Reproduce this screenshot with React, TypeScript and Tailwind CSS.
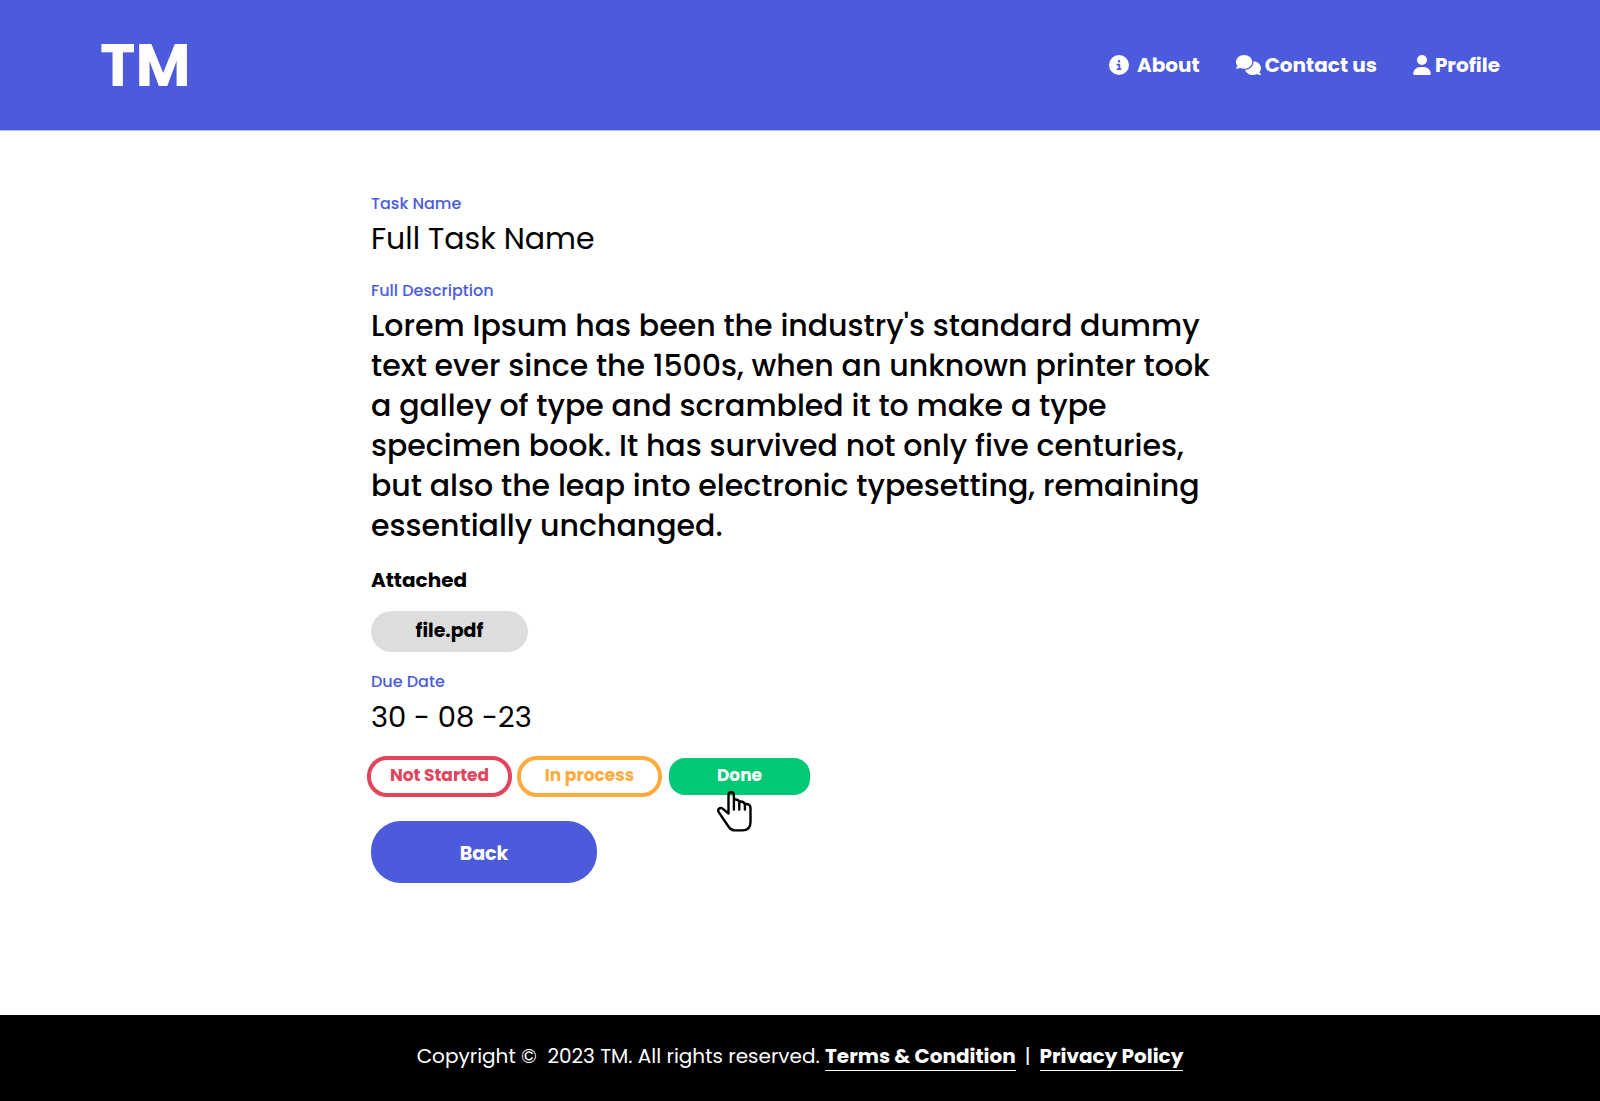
import type { ReactNode } from "react";
import { FaCircleInfo, FaComments, FaUser } from "react-icons/fa6";

function HandCursor() {
  return (
    <svg
      aria-hidden="true"
      viewBox="0 0 35 41"
      className="pointer-events-none absolute top-[33px] left-12 h-[41px] w-[35px]"
      fill="none"
      stroke="#000"
      strokeWidth="2.4"
      strokeLinecap="round"
      strokeLinejoin="round"
    >
      <path
        d="M11.5 21.5V4a2.7 2.7 0 0 1 5.4 0v4.6q4.8-1.2 5.4 2.6q4.6-1.2 5.6 2.4q5.6-1 5.6 3.4V31q0 8.4-8 8.4h-7.5q-4 0-6.200-3.400L1.600 20.800C.2 18.200 3.200 15.800 5.600 17.600Z"
        fill="#fff"
        stroke="none"
      />
      <path d="M11.500 4a2.700 2.700 0 0 1 5.400 0V4.500H11.500Z" fill="#00c875" stroke="none" />
      <path d="M11.500 22V4a2.700 2.700 0 0 1 5.400 0v14.500M16.900 8.600q4.800-.8 5.400 2.900v7M22.300 10.600q4.800-.6 5.600 3v5M27.900 13q5.600-.6 5.600 4V31q0 8.400-8 8.400h-7.500q-4 0-6.200-3.400L1.600 20.800C.2 18.200 3.200 15.800 5.600 17.600L11.500 22.500" />
    </svg>
  );
}

function Label({ children }: { children: ReactNode }) {
  return <h2 className="text-base leading-6 font-medium text-[#4c5bdc]">{children}</h2>;
}

export default function App() {
  return (
    <div className="flex min-h-screen flex-col bg-white font-['Poppins','Inter',sans-serif] text-black">
      <header className="flex h-[131px] items-center justify-between border-b border-[#b5bbf0] bg-[#4c5bdc] px-[100px] text-white">
        <a href="#" className="text-[60px] leading-none font-bold">
          TM
        </a>
        <nav className="flex items-center gap-9 text-xl font-bold">
          <a href="#about" className="flex items-center gap-2">
            <FaCircleInfo className="size-5" />
            About
          </a>
          <a href="#contact" className="flex items-center gap-1">
            <FaComments className="h-5 w-[25px]" />
            Contact us
          </a>
          <a href="#profile" className="flex items-center gap-1">
            <FaUser className="h-5 w-[18px]" />
            Profile
          </a>
        </nav>
      </header>

      <main className="mx-auto w-full max-w-[858px] flex-1 pt-[61px] pb-10">
        <Label>Task Name</Label>
        <p className="mt-[3px] text-[30px] leading-10">Full Task Name</p>

        <div className="mt-5">
          <Label>Full Description</Label>
        </div>
        <p className="mt-[3px] text-[30px] leading-10 font-medium">
          Lorem Ipsum has been the industry's standard dummy text ever since the 1500s, when an
          unknown printer took a galley of type and scrambled it to make a type specimen book. It
          has survived not only five centuries, but also the leap into electronic typesetting,
          remaining essentially unchanged.
        </p>

        <h2 className="mt-5 text-xl leading-7 font-bold">Attached</h2>
        <button
          type="button"
          className="mt-[17px] flex h-[41px] w-[157px] items-center justify-center rounded-full bg-[#dddddd] text-[19px] font-bold"
        >
          file.pdf
        </button>

        <div className="mt-[18px]">
          <Label>Due Date</Label>
        </div>
        <p className="mt-[3px] text-[29px] leading-10">30 - 08 -23</p>

        <div className="mt-[19px] -ml-1 flex items-center gap-[5px] text-[17px] leading-6 font-bold">
          <button
            type="button"
            className="h-[41px] w-[145px] rounded-[20px] border-4 border-[#e2445c] pb-1 text-[#e2445c]"
          >
            Not Started
          </button>
          <button
            type="button"
            className="h-[41px] w-[145px] rounded-[20px] border-4 border-[#fdab3d] pb-1 text-[#fdab3d]"
          >
            In process
          </button>
          <div className="relative ml-0.5">
            <button
              type="button"
              className="block h-[37px] w-[141px] rounded-2xl bg-[#00c875] pb-1 text-white"
            >
              Done
            </button>
            <HandCursor />
          </div>
        </div>

        <button
          type="button"
          className="mt-6 block h-[62px] w-[226px] rounded-[30px] bg-[#4c5bdc] pt-1 text-[19px] font-bold text-white"
        >
          Back
        </button>
      </main>

      <footer className="flex h-[86px] items-center justify-center bg-black pb-1 text-xl text-white">
        <p className="whitespace-pre">
          {"Copyright ©  2023 TM. All rights reserved. "}
          <a href="#terms" className="border-b border-white font-bold">
            Terms &amp; Condition
          </a>
          <span className="mx-[9px]">|</span>
          <a href="#privacy" className="border-b border-white font-bold">
            Privacy Policy
          </a>
        </p>
      </footer>
    </div>
  );
}
